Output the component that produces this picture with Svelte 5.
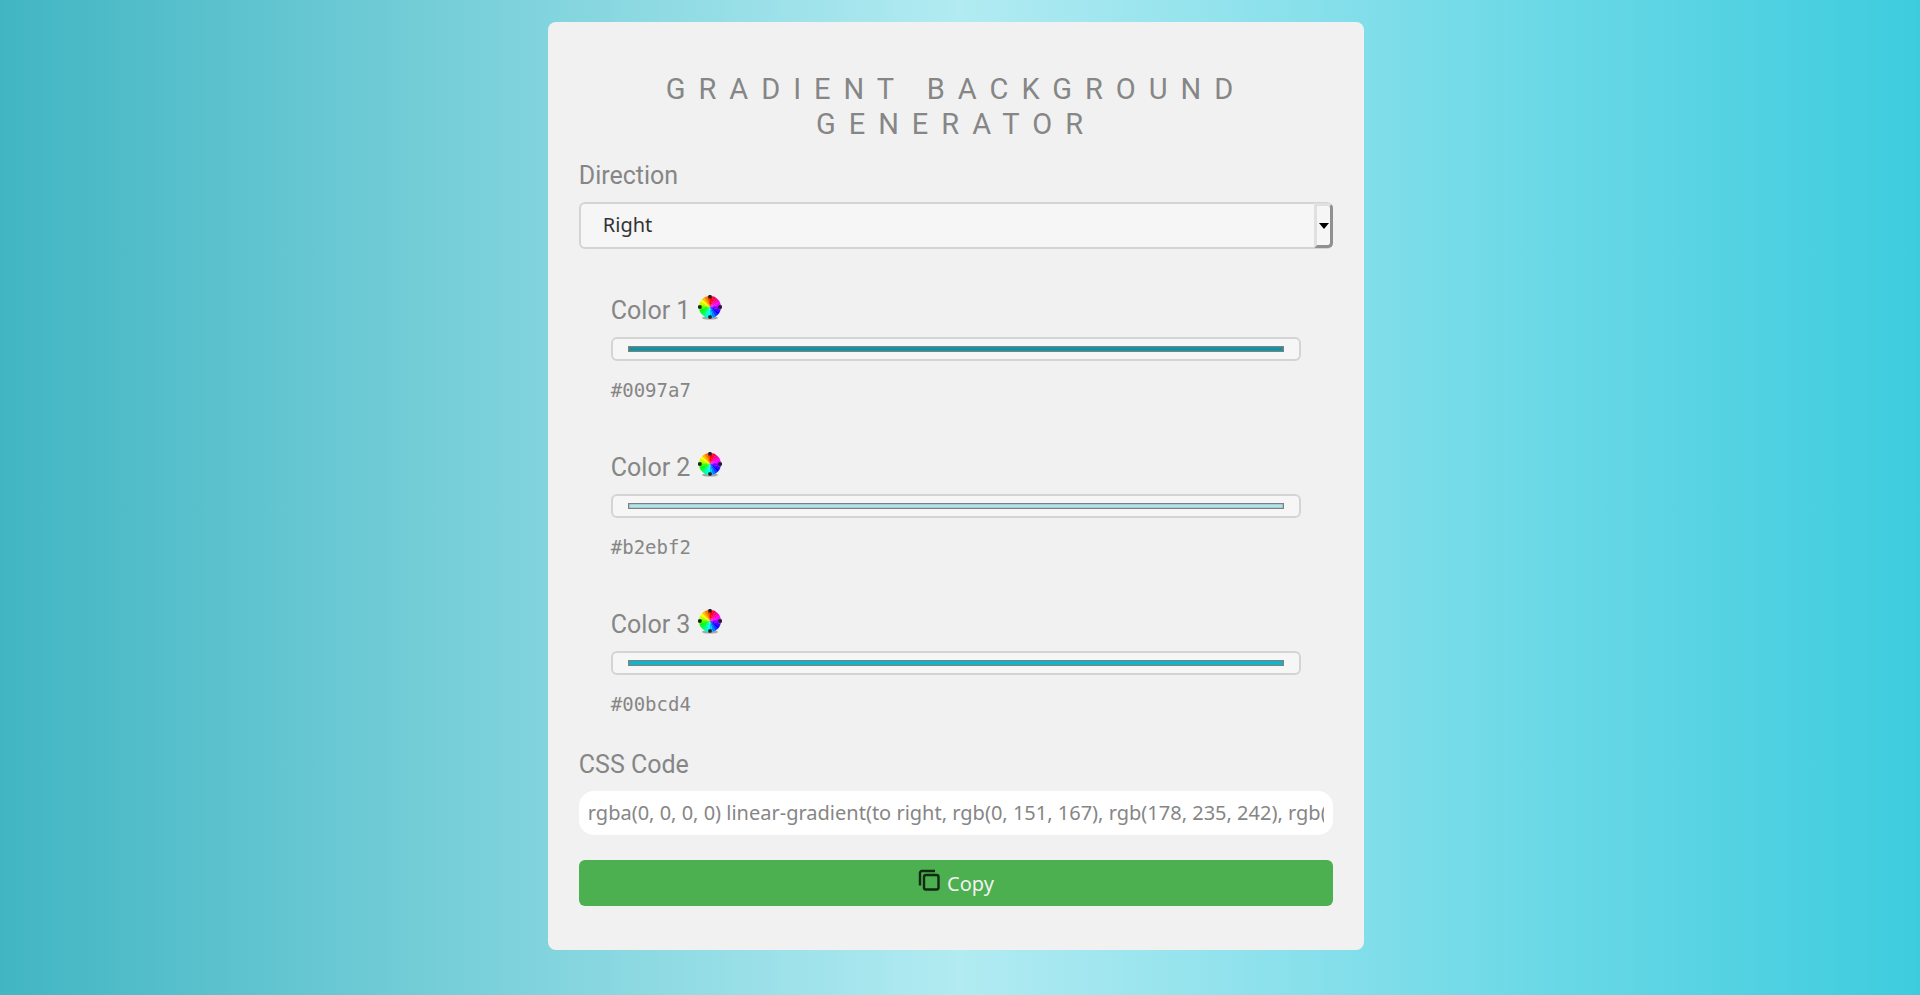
<script>
  let direction = $state('Right');
  let colors = $state(['#0097a7', '#b2ebf2', '#00bcd4']);

  const rgb = (hex) =>
    `rgb(${[1, 3, 5].map((i) => parseInt(hex.slice(i, i + 2), 16)).join(', ')})`;

  let code = $derived(
    `rgba(0, 0, 0, 0) linear-gradient(to ${direction.toLowerCase()}, ${colors.map(rgb).join(', ')})`
  );

  const hues = Array.from({ length: 24 }, (_, i) => {
    const a = (i * Math.PI) / 12;
    const b = ((i + 1.1) * Math.PI) / 12;
    const p = (t) => `${12 + 11 * Math.sin(t)} ${12 - 11 * Math.cos(t)}`;
    return { d: `M12 12L${p(a)}A11 11 0 0 1 ${p(b)}Z`, fill: `hsl(${360 - i * 15} 100% 50%)` };
  });

  function copy() {
    navigator.clipboard?.writeText(code);
  }
</script>

<main>
  <section class="card">
    <h1>Gradient Background Generator</h1>

    <label class="label" for="direction">Direction</label>
    <div class="select">
      <select id="direction" bind:value={direction}>
        <option>Right</option>
        <option>Left</option>
        <option>Top</option>
        <option>Bottom</option>
      </select>
      <span class="arrow" aria-hidden="true">
        <svg viewBox="0 0 10 6"><path d="M0 0H10L5 6Z" /></svg>
      </span>
    </div>

    {#each colors as color, i}
      <div class="color">
        <label class="label" for="color{i}">
          Color {i + 1}
          <svg class="wheel" viewBox="0 0 24 26" aria-hidden="true">
            <ellipse cx="12" cy="23" rx="8" ry="1.6" fill="#777" opacity=".6" />
            {#each hues as h}<path d={h.d} fill={h.fill} />{/each}
            <g fill="#222">
              <rect x="10.3" y="0" width="3.4" height="3.6" rx="1" />
              <rect x="10.3" y="20.2" width="3.4" height="3.6" rx="1" />
              <rect x="0" y="10.3" width="3.6" height="3.4" rx="1" />
              <rect x="20.4" y="10.3" width="3.6" height="3.4" rx="1" />
            </g>
          </svg>
        </label>
        <input id="color{i}" type="color" bind:value={colors[i]} />
        <code>{color}</code>
      </div>
    {/each}

    <label class="label" for="code">CSS Code</label>
    <input id="code" class="code" type="text" readonly value={code} />

    <button type="button" onclick={copy}>
      <svg viewBox="0 0 22 22" aria-hidden="true">
        <path d="M2 16.500V4Q2 2 4 2H17" />
        <rect x="6" y="6" width="14.500" height="14.500" rx="2" />
      </svg>
      <span>Copy</span>
    </button>
  </section>
</main>

<style>
  :global(body) {
    margin: 0;
  }
  main {
    min-height: 100vh;
    box-sizing: border-box;
    padding: 22px 8px 44px 0;
    background: linear-gradient(to right, #0097a7 -29%, #b2ebf2 50%, #00bcd4 126%);
    font-family: Roboto, sans-serif;
    color: #868686;
  }
  .card {
    display: flex;
    flex-direction: column;
    box-sizing: border-box;
    width: 42.7%;
    margin: 0 auto;
    padding: 50px 31px 44px;
    border-radius: 8px;
    background: #f1f1f1;
  }
  h1 {
    margin: 0 0 19px;
    font-size: 29px;
    line-height: 35px;
    font-weight: 400;
    letter-spacing: 13px;
    text-align: center;
    text-transform: uppercase;
  }
  .label {
    display: flex;
    align-items: center;
    gap: 8px;
    font-size: 25px;
    line-height: 30px;
  }
  .select {
    position: relative;
    margin: 11px 0 30px;
  }
  select {
    display: block;
    appearance: none;
    box-sizing: border-box;
    width: 100%;
    height: 47px;
    padding: 0 22px 3px;
    border: 2px solid #d4d4d4;
    border-radius: 6px;
    background: #f6f6f6;
    color: #333;
    font: 20px "Noto Sans", sans-serif;
  }
  .arrow {
    position: absolute;
    inset: 1px 0 1px auto;
    display: grid;
    place-items: center;
    box-sizing: border-box;
    width: 19px;
    border: 3px solid;
    border-color: #e0e0e0 #909090 #909090 #e0e0e0;
    border-radius: 0 5px 5px 0;
    background: #f6f6f6;
    pointer-events: none;
  }
  .arrow svg {
    width: 10px;
  }
  .color {
    display: flex;
    flex-direction: column;
    padding: 16px 32px 34px;
  }
  .wheel {
    width: 24px;
    height: 26px;
    margin-bottom: 5px;
  }
  input[type='color'] {
    appearance: none;
    box-sizing: border-box;
    width: 100%;
    height: 24px;
    margin: 11px 0 17px;
    padding: 7px 15px;
    border: 2px solid #d4d4d4;
    border-radius: 6px;
    background: #f6f6f6;
  }
  input[type='color']::-webkit-color-swatch-wrapper {
    padding: 0;
  }
  input[type='color']::-webkit-color-swatch {
    border: 1px solid #808080;
    border-radius: 0;
    box-shadow: inset 0 0 2px #808080;
  }
  code {
    font: 19px/24px "DejaVu Sans Mono", monospace;
  }
  .code {
    box-sizing: border-box;
    width: 100%;
    height: 44px;
    margin: 11px 0 25px;
    padding: 0 9px 2px;
    border: 0;
    border-radius: 15px;
    background: #fff;
    color: #868686;
    font: 20px "Noto Sans", sans-serif;
  }
  button {
    display: flex;
    align-items: center;
    justify-content: center;
    gap: 7px;
    height: 46px;
    padding: 0;
    border: 0;
    border-radius: 6px;
    background: #4caf50;
    color: #f1f1f1;
    font: 20px "Noto Sans", sans-serif;
  }
  button svg {
    width: 22px;
    height: 22px;
    margin-bottom: 6px;
    fill: none;
    stroke: #132914;
    stroke-width: 2.4;
  }
</style>
